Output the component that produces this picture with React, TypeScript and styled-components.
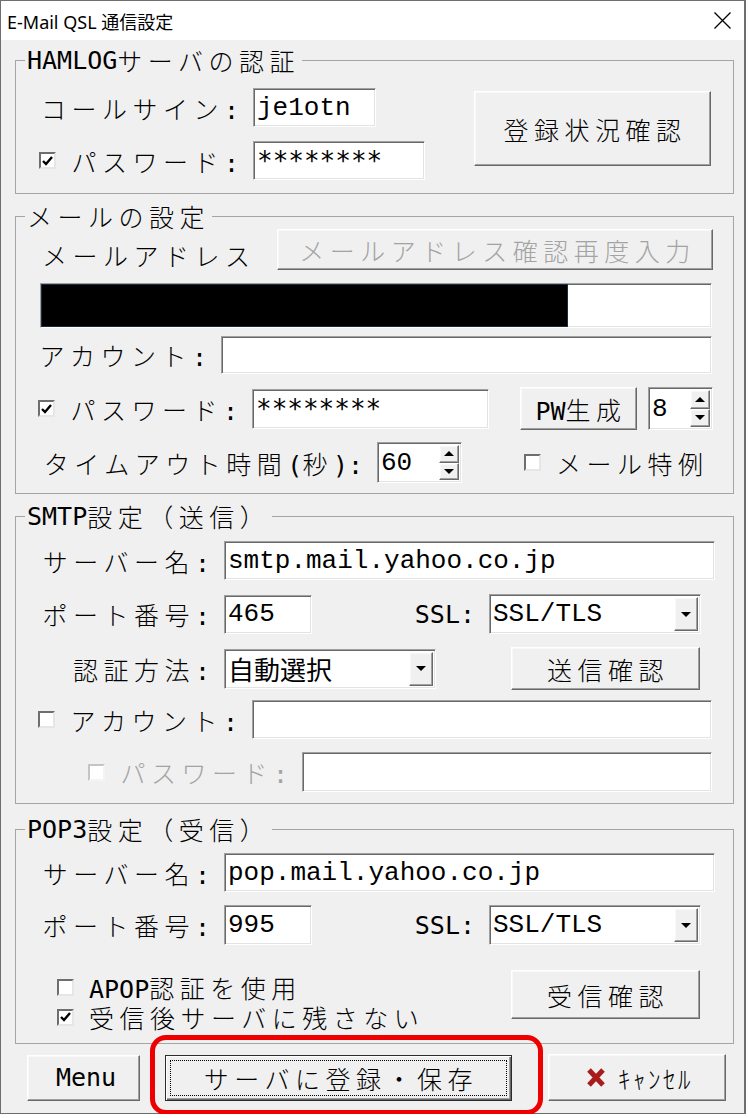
import styled, { createGlobalStyle, css } from "styled-components";

const GlobalStyle = createGlobalStyle`
  html, body {
    margin: 0;
    padding: 0;
    background: #ffffff;
  }
  body {
    font-family: "Noto Sans CJK JP", "Noto Sans", sans-serif;
    color: #000;
  }
`;

const ui = css`
  font-family: "Noto Sans CJK JP", sans-serif;
  font-size: 25px;
  font-weight: 300;
  letter-spacing: 5.5px;
  line-height: 30px;
`;

const raised = css`
  background: #f0f0f0;
  border: 1px solid;
  border-color: #ffffff #696969 #696969 #ffffff;
  box-shadow: inset -1px -1px 0 #a0a0a0, inset 1px 1px 0 #f8f8f8;
`;

const sunken = css`
  background: #ffffff;
  border: 1px solid;
  border-color: #a0a0a0 #ffffff #ffffff #a0a0a0;
  box-shadow: inset 1px 1px 0 #696969, inset -1px -1px 0 #e3e3e3;
`;

const Window = styled.div`
  box-sizing: border-box;
  width: 746px;
  height: 1114px;
  background: #f0f0f0;
  border: 1px solid #6e6e6e;
  border-right-width: 2px;
  display: flex;
  flex-direction: column;
`;

const TitleBar = styled.div`
  flex-shrink: 0;
  height: 39px;
  background: #ffffff;
  display: flex;
  align-items: center;
  justify-content: space-between;
  padding: 0 13px 0 6px;
`;

const Title = styled.span`
  font-family: "Noto Sans", "Noto Sans CJK JP", sans-serif;
  font-size: 18px;
`;

const Body = styled.div`
  padding: 7px 0 0 14px;
  display: flex;
  flex-direction: column;
`;

const Group = styled.fieldset<{ $top?: number; $pt: number; $pb: number }>`
  box-sizing: border-box;
  width: 719px;
  min-width: 0;
  margin: ${(p) => p.$top ?? 0}px 0 0;
  padding: ${(p) => p.$pt}px 0 ${(p) => p.$pb}px;
  border: 1px solid #a5a5a5;
`;

const Legend = styled.legend`
  ${ui}
  height: 26px;
  line-height: 26px;
  margin-left: 9px;
  padding: 0 2px;
  display: flex;
  align-items: center;
`;

/* half-width latin run, one 15px cell per character */
const Lat = styled.span`
  font-family: "DejaVu Sans Mono", monospace;
  font-weight: 400;
  letter-spacing: 0;
  line-height: 1;
`;

const Co = styled(Lat)`
  display: inline-block;
  width: 15px;
  text-align: center;
`;

const Kana = styled.span`
  letter-spacing: 2.5px;
`;

const Row = styled.div<{ $mt?: number; $align?: string }>`
  display: flex;
  align-items: ${(p) => p.$align ?? "center"};
  margin-top: ${(p) => p.$mt ?? 0}px;
`;

const Col = styled.div<{ $w?: number; $gap?: number; $pt?: number }>`
  display: flex;
  flex-direction: column;
  flex-shrink: 0;
  width: ${(p) => (p.$w ? `${p.$w}px` : "auto")};
  gap: ${(p) => p.$gap ?? 0}px;
  padding-top: ${(p) => p.$pt ?? 0}px;
`;

const Label = styled.label<{ $w?: number; $left?: number; $dim?: boolean }>`
  ${ui}
  box-sizing: border-box;
  flex-shrink: 0;
  height: 30px;
  width: ${(p) => (p.$w ? `${p.$w}px` : "auto")};
  display: flex;
  align-items: center;
  justify-content: ${(p) => (p.$left !== undefined ? "flex-start" : "flex-end")};
  padding: 0 ${(p) => (p.$left !== undefined ? 0 : 14)}px 0 ${(p) => p.$left ?? 0}px;
  gap: 15px;
  color: ${(p) => (p.$dim ? "#a3a3a3" : "#000")};
  white-space: nowrap;
`;

const Field = styled.div<{ $w: number; $h: number; $ml?: number; $pl?: number }>`
  ${sunken}
  box-sizing: border-box;
  flex-shrink: 0;
  width: ${(p) => p.$w}px;
  height: ${(p) => p.$h}px;
  margin-left: ${(p) => p.$ml ?? 0}px;
  display: flex;
  align-items: center;
  padding-left: ${(p) => p.$pl ?? 3}px;
  font-family: "Liberation Mono", "Noto Sans CJK JP", monospace;
  font-size: 26px;
  white-space: nowrap;
  overflow: hidden;
`;

const Redact = styled.div`
  box-sizing: border-box;
  width: 527px;
  height: 100%;
  background: #000;
  border: 1px solid #1c2a44;
`;

const Combo = styled(Field)`
  justify-content: space-between;
  padding: 2px 2px 2px 3px;
`;

const SpinBox = styled(Field)`
  justify-content: space-between;
  padding: 2px 2px 2px 3px;
`;

const DropBtn = styled.span`
  ${raised}
  box-sizing: border-box;
  align-self: stretch;
  width: 24px;
  display: flex;
  align-items: center;
  justify-content: center;
`;

const SpinBtns = styled.span`
  align-self: stretch;
  width: 20px;
  display: flex;
  flex-direction: column;
`;

const SpinHalf = styled.span`
  ${raised}
  box-sizing: border-box;
  flex: 1;
  display: flex;
  align-items: center;
  justify-content: center;
`;

const Tri = styled.span<{ $up?: boolean }>`
  width: 0;
  height: 0;
  border-left: 5px solid transparent;
  border-right: 5px solid transparent;
  ${(p) =>
    p.$up ? "border-bottom: 5px solid #000;" : "border-top: 5px solid #000;"}
`;

const Btn = styled.div<{
  $w: number;
  $h: number;
  $ml?: number;
  $mt?: number;
  $off?: boolean;
  $def?: boolean;
}>`
  ${raised}
  ${ui}
  box-sizing: border-box;
  flex-shrink: 0;
  width: ${(p) => p.$w}px;
  height: ${(p) => p.$h}px;
  margin-left: ${(p) => p.$ml ?? 0}px;
  margin-top: ${(p) => p.$mt ?? 0}px;
  padding-left: 5px;
  display: flex;
  align-items: center;
  justify-content: center;
  gap: 12px;
  color: ${(p) => (p.$off ? "#a3a3a3" : "#000")};
  white-space: nowrap;
  ${(p) =>
    p.$def &&
    css`
      border: 1px solid #2b2b2b;
      box-shadow: inset 1px 1px 0 #ffffff, inset -1px -1px 0 #696969,
        inset -2px -2px 0 #a0a0a0;
      outline: 1px dotted #000;
      outline-offset: -6px;
    `}
`;

const Check = styled.span<{ $off?: boolean }>`
  box-sizing: border-box;
  flex-shrink: 0;
  width: 17px;
  height: 17px;
  background: #ffffff;
  border: 2px solid;
  border-color: ${(p) =>
    p.$off ? "#c4c4c4 #f4f4f4 #f4f4f4 #c4c4c4" : "#6e6e6e #e6e6e6 #e6e6e6 #6e6e6e"};
  display: flex;
  align-items: center;
  justify-content: center;
`;

const Footer = styled.div`
  display: flex;
  align-items: center;
  margin: 10px 0 0 12px;
`;

const SaveWrap = styled.div`
  position: relative;
  margin-left: 25px;
`;

const Callout = styled.span`
  position: absolute;
  left: -15px;
  right: -31px;
  top: -20px;
  bottom: -14px;
  border: 5px solid #ee0000;
  border-radius: 16px;
  pointer-events: none;
`;

function CheckBox({ on, off }: { on?: boolean; off?: boolean }) {
  return (
    <Check $off={off}>
      {on && (
        <svg width="11" height="10" viewBox="0 0 11 10">
          <path d="M1 5 L4 8 L10 1" fill="none" stroke="#000" strokeWidth="2.4" />
        </svg>
      )}
    </Check>
  );
}

function Spin({ w, h, ml, value }: { w: number; h: number; ml?: number; value: string }) {
  return (
    <SpinBox $w={w} $h={h} $ml={ml}>
      {value}
      <SpinBtns>
        <SpinHalf>
          <Tri $up />
        </SpinHalf>
        <SpinHalf>
          <Tri />
        </SpinHalf>
      </SpinBtns>
    </SpinBox>
  );
}

function Select({ w, h, ml, value }: { w: number; h: number; ml?: number; value: string }) {
  return (
    <Combo $w={w} $h={h} $ml={ml}>
      {value}
      <DropBtn>
        <Tri />
      </DropBtn>
    </Combo>
  );
}

function App() {
  return (
    <>
      <GlobalStyle />
      <Window>
        <TitleBar>
          <Title>E-Mail QSL 通信設定</Title>
          <svg width="17" height="17" viewBox="0 0 17 17">
            <path d="M0.5 0.5 L16.5 16.5 M16.5 0.5 L0.5 16.5" stroke="#000" strokeWidth="1.3" />
          </svg>
        </TitleBar>
        <Body>
          <Group $pt={15} $pb={13}>
            <Legend>
              <Lat>HAMLOG</Lat>サーバの認証
            </Legend>
            <Row $align="flex-start">
              <Col $gap={14}>
                <Row>
                  <Label $w={237}>
                    <span>
                      コールサイン<Co>:</Co>
                    </span>
                  </Label>
                  <Field $w={123} $h={39}>je1otn</Field>
                </Row>
                <Row>
                  <Label $w={237}>
                    <CheckBox on />
                    <span>
                      パスワード<Co>:</Co>
                    </span>
                  </Label>
                  <Field $w={172} $h={39}>
                    <Lat>********</Lat>
                  </Field>
                </Row>
              </Col>
              <Btn $w={237} $h={75} $ml={49} $mt={3}>
                登録状況確認
              </Btn>
            </Row>
          </Group>

          <Group $top={9} $pt={0} $pb={10}>
            <Legend>メールの設定</Legend>
            <Row $align="flex-end">
              <Label $w={261} $left={26}>
                <span>メールアドレス</span>
              </Label>
              <Btn $w={436} $h={41} $off>
                メールアドレス確認再度入力
              </Btn>
            </Row>
            <Row $mt={13}>
              <Field $w={672} $h={45} $ml={24} $pl={0}>
                <Redact />
              </Field>
            </Row>
            <Row $mt={8}>
              <Label $w={205}>
                <span>
                  アカウント<Co>:</Co>
                </span>
              </Label>
              <Field $w={491} $h={38} />
            </Row>
            <Row $mt={13}>
              <Label $w={236}>
                <CheckBox on />
                <span>
                  パスワード<Co>:</Co>
                </span>
              </Label>
              <Field $w={237} $h={40}>
                <Lat>********</Lat>
              </Field>
              <Btn $w={117} $h={43} $ml={31}>
                <span>
                  <Lat>PW</Lat>生成
                </span>
              </Btn>
              <Spin w={65} h={43} ml={11} value="8" />
            </Row>
            <Row $mt={12}>
              <Label $w={361}>
                <span>
                  タイムアウト時間<Lat>(</Lat>秒<Lat>)</Lat>
                  <Co>:</Co>
                </span>
              </Label>
              <Spin w={85} h={41} value="60" />
              <Label $left={62}>
                <CheckBox />
                <span>メール特例</span>
              </Label>
            </Row>
          </Group>

          <Group $top={9} $pt={12} $pb={11}>
            <Legend>
              <Lat>SMTP</Lat>設定（送信）
            </Legend>
            <Row>
              <Label $w={208}>
                <span>
                  サーバー名<Co>:</Co>
                </span>
              </Label>
              <Field $w={491} $h={39}>smtp.mail.yahoo.co.jp</Field>
            </Row>
            <Row $mt={14}>
              <Label $w={208}>
                <span>
                  ポート番号<Co>:</Co>
                </span>
              </Label>
              <Field $w={88} $h={39}>465</Field>
              <Label $w={177}>
                <Lat>SSL:</Lat>
              </Label>
              <Select w={212} h={40} value="SSL/TLS" />
            </Row>
            <Row $mt={13}>
              <Label $w={208}>
                <span>
                  認証方法<Co>:</Co>
                </span>
              </Label>
              <Select w={212} h={40} value="自動選択" />
              <Btn $w={189} $h={43} $ml={75}>
                送信確認
              </Btn>
            </Row>
            <Row $mt={10}>
              <Label $w={236}>
                <CheckBox />
                <span>
                  アカウント<Co>:</Co>
                </span>
              </Label>
              <Field $w={460} $h={39} />
            </Row>
            <Row $mt={13}>
              <Label $w={286} $dim>
                <CheckBox off />
                <span>
                  パスワード<Co>:</Co>
                </span>
              </Label>
              <Field $w={410} $h={40} />
            </Row>
          </Group>

          <Group $top={12} $pt={11} $pb={11}>
            <Legend>
              <Lat>POP3</Lat>設定（受信）
            </Legend>
            <Row>
              <Label $w={208}>
                <span>
                  サーバー名<Co>:</Co>
                </span>
              </Label>
              <Field $w={491} $h={39}>pop.mail.yahoo.co.jp</Field>
            </Row>
            <Row $mt={13}>
              <Label $w={208}>
                <span>
                  ポート番号<Co>:</Co>
                </span>
              </Label>
              <Field $w={88} $h={40}>995</Field>
              <Label $w={177}>
                <Lat>SSL:</Lat>
              </Label>
              <Select w={212} h={40} value="SSL/TLS" />
            </Row>
            <Row $mt={25} $align="flex-start">
              <Col $w={495} $pt={2}>
                <Label $left={41}>
                  <CheckBox />
                  <span>
                    <Lat>APOP</Lat>認証を使用
                  </span>
                </Label>
                <Label $left={41}>
                  <CheckBox on />
                  <span>受信後サーバに残さない</span>
                </Label>
              </Col>
              <Btn $w={189} $h={49}>
                受信確認
              </Btn>
            </Row>
          </Group>

          <Footer>
            <Btn $w={113} $h={46}>
              <Lat>Menu</Lat>
            </Btn>
            <SaveWrap>
              <Btn $w={347} $h={46} $def>
                サーバに登録・保存
              </Btn>
              <Callout />
            </SaveWrap>
            <Btn $w={178} $h={47} $ml={36}>
              <svg width="20" height="19" viewBox="0 0 20 19">
                <path d="M3 2 L17 17 M17 2 L3 17" stroke="#a81c1c" strokeWidth="5" />
              </svg>
              <Kana>ｷｬﾝｾﾙ</Kana>
            </Btn>
          </Footer>
        </Body>
      </Window>
    </>
  );
}

export default App;
